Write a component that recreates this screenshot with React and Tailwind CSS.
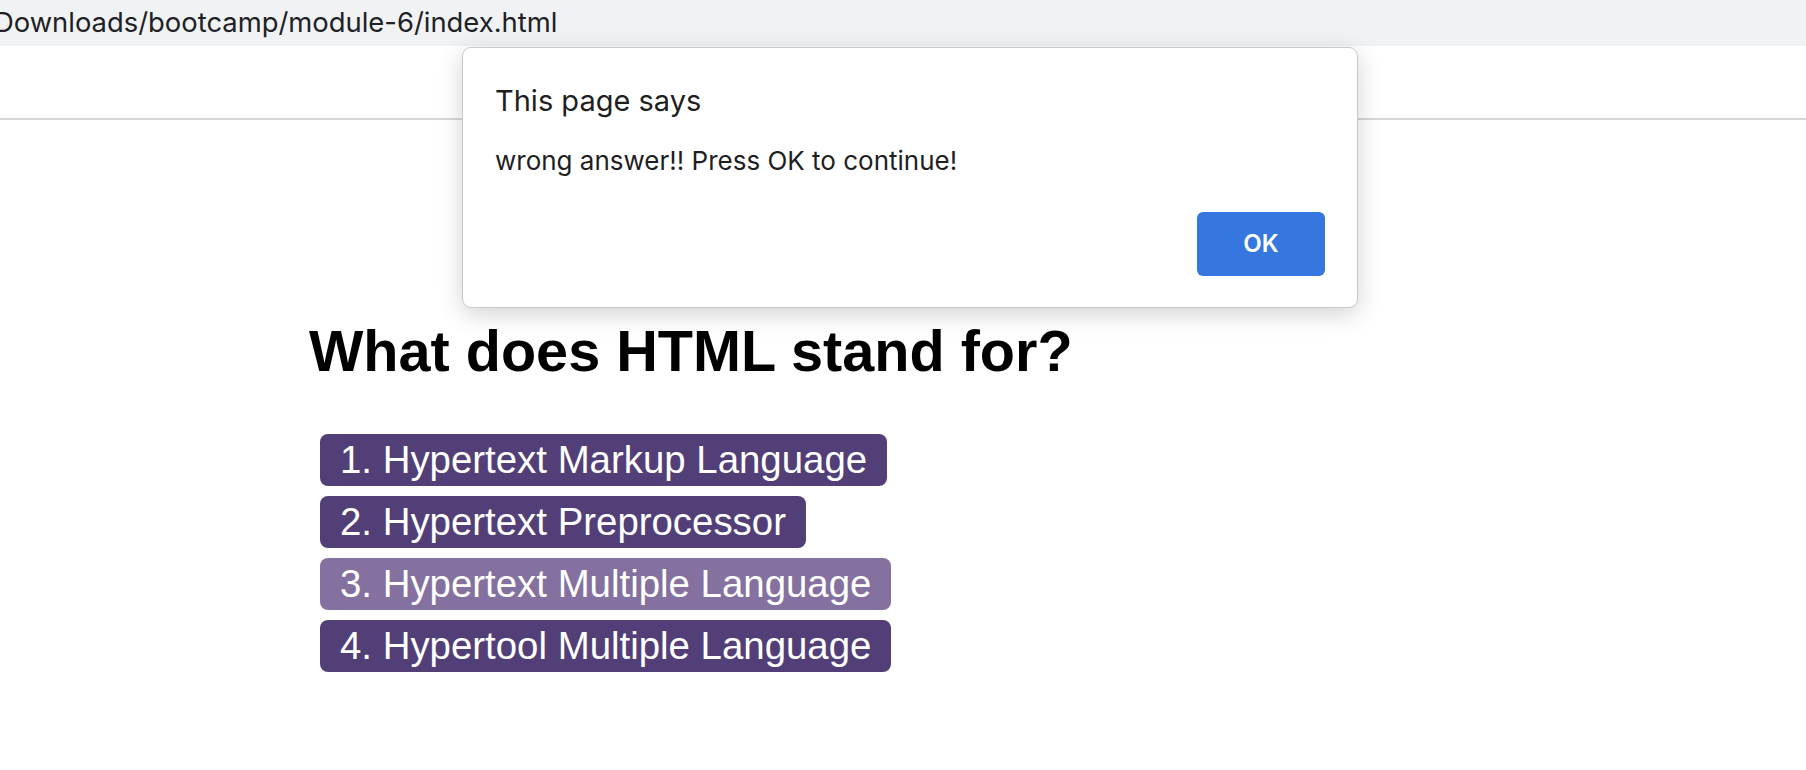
import React from 'react';

const answers = [
  { label: '1. Hypertext Markup Language', active: false },
  { label: '2. Hypertext Preprocessor', active: false },
  { label: '3. Hypertext Multiple Language', active: true },
  { label: '4. Hypertool Multiple Language', active: false },
];

function AlertDialog() {
  return (
    <div className="absolute left-[462px] top-[47px] flex h-[261px] w-[896px] flex-col rounded-[9px] border border-[#c9c9c9] bg-white px-[32px] pt-[35px] pb-[31px] shadow-[0_6px_24px_rgba(0,0,0,0.18)] font-['Inter',sans-serif] text-[#1f1f1f]">
      <p className="text-[29px] leading-[36px]">This page says</p>
      <p className="mt-[26px] text-[26px] leading-[32px]">wrong answer!! Press OK to continue!</p>
      <div className="mt-auto flex justify-end">
        <button className="h-[64px] w-[128px] rounded-[6px] bg-[#3577df] text-[24px] font-semibold text-white">
          OK
        </button>
      </div>
    </div>
  );
}

export default function App() {
  return (
    <div className="relative h-[770px] w-[1806px] overflow-hidden bg-white">
      <div className="flex h-[46px] items-center overflow-hidden bg-[#f1f2f4] font-['Inter',sans-serif] text-[27.4px] text-[#202124]">
        <span className="-ml-[6px] whitespace-nowrap">Downloads/bootcamp/module-6/index.html</span>
      </div>
      <div className="h-[74px] border-b-2 border-[#d6d6d6]" />

      <main className="pl-[309px] pt-[198px] font-['Liberation_Sans',Arial,sans-serif]">
        <h1 className="text-[57.6px] font-bold leading-[66px] text-black">What does HTML stand for?</h1>
        <ul className="mt-[50px] flex flex-col items-start gap-[10px] pl-[11px]">
          {answers.map((a) => (
            <li
              key={a.label}
              className={`rounded-[8px] px-[20px] py-[4px] text-[38.4px] leading-[44px] text-white ${
                a.active ? 'bg-[#8471a0]' : 'bg-[#523f77]'
              }`}
            >
              {a.label}
            </li>
          ))}
        </ul>
      </main>

      <AlertDialog />
    </div>
  );
}
